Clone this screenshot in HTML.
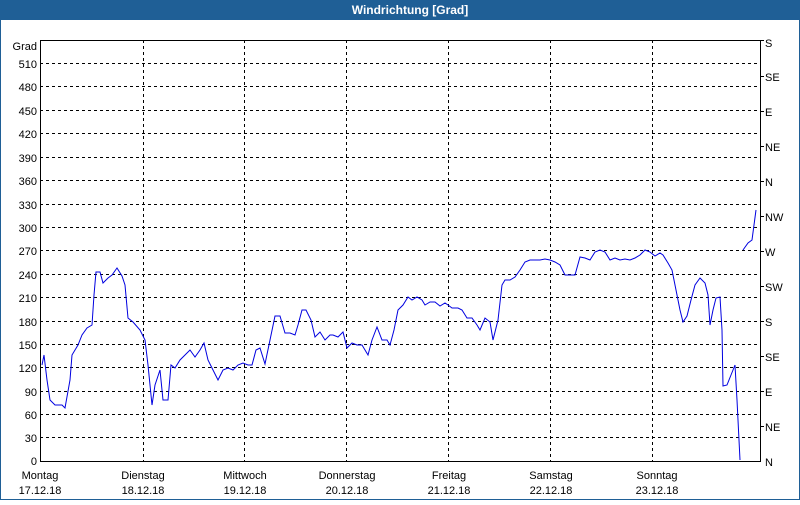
<!DOCTYPE html>
<html><head><style>
body{margin:0;width:800px;height:500px;overflow:hidden;background:#fff;font-family:"Liberation Sans",sans-serif;}
</style></head><body>
<svg width="800" height="500" xmlns="http://www.w3.org/2000/svg" font-family="Liberation Sans, sans-serif" font-size="11">
<rect x="0" y="0" width="800" height="500" fill="#fff"/>
<rect x="0.5" y="0.5" width="799" height="499" fill="none" stroke="#1f5f96"/>
<rect x="0" y="0" width="800" height="20" fill="#1f5f96"/>
<text x="410" y="14" fill="#fff" font-weight="bold" font-size="12" text-anchor="middle">Windrichtung [Grad]</text>
<g stroke="#000" stroke-dasharray="3,3" stroke-width="1">
<line x1="40" y1="63.5" x2="760" y2="63.5"/><line x1="40" y1="86.5" x2="760" y2="86.5"/><line x1="40" y1="110.5" x2="760" y2="110.5"/><line x1="40" y1="133.5" x2="760" y2="133.5"/><line x1="40" y1="157.5" x2="760" y2="157.5"/><line x1="40" y1="180.5" x2="760" y2="180.5"/><line x1="40" y1="204.5" x2="760" y2="204.5"/><line x1="40" y1="227.5" x2="760" y2="227.5"/><line x1="40" y1="250.5" x2="760" y2="250.5"/><line x1="40" y1="274.5" x2="760" y2="274.5"/><line x1="40" y1="297.5" x2="760" y2="297.5"/><line x1="40" y1="321.5" x2="760" y2="321.5"/><line x1="40" y1="344.5" x2="760" y2="344.5"/><line x1="40" y1="367.5" x2="760" y2="367.5"/><line x1="40" y1="391.5" x2="760" y2="391.5"/><line x1="40" y1="414.5" x2="760" y2="414.5"/><line x1="40" y1="437.5" x2="760" y2="437.5"/>
<line x1="143.5" y1="40" x2="143.5" y2="461"/><line x1="244.5" y1="40" x2="244.5" y2="461"/><line x1="346.5" y1="40" x2="346.5" y2="461"/><line x1="448.5" y1="40" x2="448.5" y2="461"/><line x1="550.5" y1="40" x2="550.5" y2="461"/><line x1="652.5" y1="40" x2="652.5" y2="461"/>
</g>
<path d="M40.5 40.5H760.5V461.5H40.5Z" fill="none" stroke="#000"/>
<g stroke="#000"><line x1="760" y1="40.5" x2="764" y2="40.5"/><line x1="760" y1="76.5" x2="764" y2="76.5"/><line x1="760" y1="111.5" x2="764" y2="111.5"/><line x1="760" y1="146.5" x2="764" y2="146.5"/><line x1="760" y1="181.5" x2="764" y2="181.5"/><line x1="760" y1="216.5" x2="764" y2="216.5"/><line x1="760" y1="251.5" x2="764" y2="251.5"/><line x1="760" y1="286.5" x2="764" y2="286.5"/><line x1="760" y1="321.5" x2="764" y2="321.5"/><line x1="760" y1="356.5" x2="764" y2="356.5"/><line x1="760" y1="391.5" x2="764" y2="391.5"/><line x1="760" y1="426.5" x2="764" y2="426.5"/></g>
<g text-anchor="end" fill="#000">
<text x="37" y="50">Grad</text><text x="37" y="68">510</text><text x="37" y="91">480</text><text x="37" y="115">450</text><text x="37" y="138">420</text><text x="37" y="162">390</text><text x="37" y="185">360</text><text x="37" y="209">330</text><text x="37" y="232">300</text><text x="37" y="255">270</text><text x="37" y="279">240</text><text x="37" y="302">210</text><text x="37" y="326">180</text><text x="37" y="349">150</text><text x="37" y="372">120</text><text x="37" y="396">90</text><text x="37" y="419">60</text><text x="37" y="442">30</text><text x="37" y="465">0</text>
</g>
<g fill="#000">
<text x="765" y="47">S</text><text x="765" y="81">SE</text><text x="765" y="116">E</text><text x="765" y="151">NE</text><text x="765" y="186">N</text><text x="765" y="221">NW</text><text x="765" y="256">W</text><text x="765" y="291">SW</text><text x="765" y="326">S</text><text x="765" y="361">SE</text><text x="765" y="396">E</text><text x="765" y="431">NE</text><text x="765" y="466">N</text>
</g>
<g fill="#000" text-anchor="middle">
<text x="40" y="479">Montag</text><text x="40" y="494">17.12.18</text>
<text x="143" y="479">Dienstag</text><text x="143" y="494">18.12.18</text>
<text x="245" y="479">Mittwoch</text><text x="245" y="494">19.12.18</text>
<text x="347" y="479">Donnerstag</text><text x="347" y="494">20.12.18</text>
<text x="449" y="479">Freitag</text><text x="449" y="494">21.12.18</text>
<text x="551" y="479">Samstag</text><text x="551" y="494">22.12.18</text>
<text x="657" y="479">Sonntag</text><text x="657" y="494">23.12.18</text>
</g>
<g fill="none" stroke="#0000e0" stroke-width="1">
<polyline points="42,365 44,355 47,380 50,400 55,405 62,405 65,408 70,380 72,355 78,345 82,335 87,328 92,325 94,295 96,272 100,272 103,283 108,278 112,275 117,268 122,276 125,285 128,318 133,322 140,330 145,340 148,365 152,405 155,385 160,370 163,400 168,400 171,365 175,368 180,360 185,355 190,350 195,357 200,350 204,343 208,360 213,370 218,380 223,370 228,368 233,370 238,365 243,363 248,365 252,365 256,350 260,348 265,364 270,340 275,316 280,316 285,333 290,333 295,335 298,325 302,310 306,310 311,320 315,337 320,332 325,340 330,335 333,335 338,337 343,332 347,348 352,343 357,345 362,345 368,355 372,340 377,327 382,340 387,340 390,345 394,330 398,310 403,305 408,297 412,300 417,297 422,300 425,305 430,302 435,302 440,306 445,303 448,305 452,308 458,308 462,310 467,318 472,318 477,325 480,330 485,318 490,322 493,340 498,320 502,285 505,280 510,280 515,277 520,270 525,262 530,260 535,260 540,260 545,259 550,260 555,262 560,265 565,275 570,275 575,275 580,257 585,258 590,260 595,252 600,250 605,252 610,260 615,258 620,260 625,259 630,260 635,258 640,255 645,250 650,252 655,256 660,253 663,255 668,263 672,270 676,290 680,310 683,322 687,316 691,300 695,285 700,278 705,283 708,295 710,325 713,310 716,298 720,297 722,330 723,386 727,385 731,375 735,365 737,400 740,460"/>
<polyline points="743,250 748,243 752,240 756,210"/>
</g>
</svg>
</body></html>
